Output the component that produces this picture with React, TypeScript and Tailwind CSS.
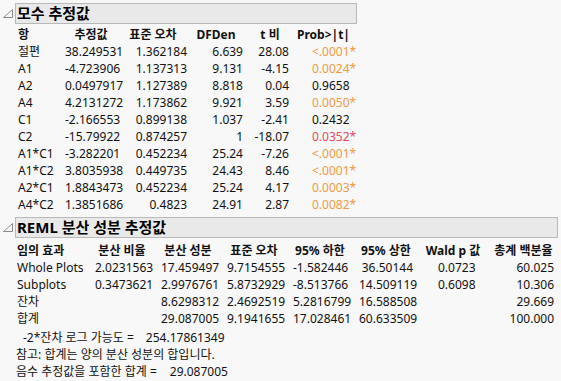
import React from 'react';

type Sig = 'none' | 'orange' | 'red';

const paramRows: [string, string, string, string, string, string, Sig][] = [
  ['절편', '38.249531', '1.362184', '6.639', '28.08', '<.0001', 'orange'],
  ['A1', '-4.723906', '1.137313', '9.131', '-4.15', '0.0024', 'orange'],
  ['A2', '0.0497917', '1.127389', '8.818', '0.04', '0.9658', 'none'],
  ['A4', '4.2131272', '1.173862', '9.921', '3.59', '0.0050', 'orange'],
  ['C1', '-2.166553', '0.899138', '1.037', '-2.41', '0.2432', 'none'],
  ['C2', '-15.79922', '0.874257', '1', '-18.07', '0.0352', 'red'],
  ['A1*C1', '-3.282201', '0.452234', '25.24', '-7.26', '<.0001', 'orange'],
  ['A1*C2', '3.8035938', '0.449735', '24.43', '8.46', '<.0001', 'orange'],
  ['A2*C1', '1.8843473', '0.452234', '25.24', '4.17', '0.0003', 'orange'],
  ['A4*C2', '1.3851686', '0.4823', '24.91', '2.87', '0.0082', 'orange'],
];

const remlRows: string[][] = [
  ['Whole Plots', '2.0231563', '17.459497', '9.7154555', '-1.582446', '36.50144', '0.0723', '60.025'],
  ['Subplots', '0.3473621', '2.9976761', '5.8732929', '-8.513766', '14.509119', '0.6098', '10.306'],
  ['잔차', '', '8.6298312', '2.4692519', '5.2816799', '16.588508', '', '29.669'],
  ['합계', '', '29.087005', '9.1941655', '17.028461', '60.633509', '', '100.000'],
];

const Disclosure = () => (
  <svg width="15" height="21" viewBox="0 0 15 21" className="shrink-0">
    <polygon points="12.5,6.5 12.5,14.5 3.5,14.5" fill="none" stroke="#8c8c8c" strokeWidth="1" />
  </svg>
);

const OutlineHeader = ({ title, width }: { title: string; width: string }) => (
  <div className="flex items-center h-[21px]">
    <Disclosure />
    <div className={`${width} h-[21px] bg-[#e9e9e9] border border-[#b9b9b9] flex items-center pl-[1px]`}>
      <span className="text-[15px] font-bold leading-none text-black">{title}</span>
    </div>
  </div>
);

const sigColor = (s: Sig) =>
  s === 'orange' ? 'text-[#f09a45]' : s === 'red' ? 'text-[#e5485c]' : 'text-[#111]';

const App = () => {
  return (
    <div className="w-[561px] h-[381px] bg-[#f8f8f8] overflow-hidden text-[12px] text-[#111] font-['Noto_Sans','Noto_Sans_CJK_KR',sans-serif]">
      <div className="pt-[3px]">
        <OutlineHeader title="모수 추정값" width="w-[342px]" />

        <div className="ml-[18px] mt-[2px] grid grid-cols-[47px_52px_72px_54px_54px_52px] auto-rows-[17px] items-center leading-none">
          <div className="font-bold">항</div>
          <div className="font-bold text-center">추정값</div>
          <div className="font-bold text-center">표준 오차</div>
          <div className="font-bold text-center">DFDen</div>
          <div className="font-bold text-center">t 비</div>
          <div className="font-bold text-center">Prob&gt;|t|</div>

          {paramRows.map((r) => (
            <React.Fragment key={r[0]}>
              <div>{r[0]}</div>
              <div className="text-right">{r[1]}</div>
              <div className="text-right pr-[2px]">{r[2]}</div>
              <div className="text-right">{r[3]}</div>
              <div className="text-right pr-[8px]">{r[4]}</div>
              <div className={`pl-[15px] whitespace-nowrap ${sigColor(r[6])}`}>
                {r[5]}
                {r[6] !== 'none' && '*'}
              </div>
            </React.Fragment>
          ))}
        </div>
      </div>

      <div className="mt-[4px]">
        <OutlineHeader title="REML 분산 성분 추정값" width="w-[543px]" />

        <div className="ml-[17px] mt-[4px] grid grid-cols-[66px_54px_54px_54px_54px_54px_56px_61px] gap-x-3 auto-rows-[17px] items-center leading-none whitespace-nowrap">
          <div className="font-bold">임의 효과</div>
          <div className="font-bold text-center">분산 비율</div>
          <div className="font-bold text-center">분산 성분</div>
          <div className="font-bold text-center">표준 오차</div>
          <div className="font-bold text-center">95% 하한</div>
          <div className="font-bold text-center">95% 상한</div>
          <div className="font-bold text-center">Wald p 값</div>
          <div className="font-bold text-center">총계 백분율</div>

          {remlRows.map((r) => (
            <React.Fragment key={r[0]}>
              <div>{r[0]}</div>
              <div className="text-right">{r[1]}</div>
              <div className="text-right">{r[2]}</div>
              <div className="text-right">{r[3]}</div>
              <div className="text-right">{r[4]}</div>
              <div className="text-right">{r[5]}</div>
              <div className="pl-[13px]">{r[6]}</div>
              <div className="text-right">{r[7]}</div>
            </React.Fragment>
          ))}
        </div>

        <div className="mt-[2px] leading-[17px] whitespace-nowrap">
          <div className="pl-[23px]">
            -2*잔차 로그 가능도 =<span className="ml-[12px]">254.17861349</span>
          </div>
          <div className="pl-[16px]">참고: 합계는 양의 분산 성분의 합입니다.</div>
          <div className="pl-[16px]">
            음수 추정값을 포함한 합계 =<span className="ml-[13px]">29.087005</span>
          </div>
        </div>
      </div>
    </div>
  );
};

export default App;
